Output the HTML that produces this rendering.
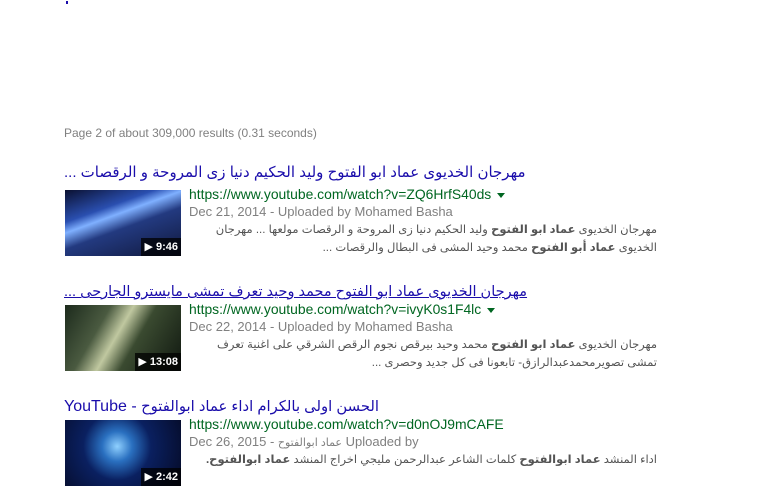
<!DOCTYPE html>
<html><head><meta charset="utf-8"><style>
body{margin:0;width:772px;height:498px;background:#fff;font-family:"Liberation Sans","DejaVu Sans",sans-serif;position:relative;overflow:hidden}
.a{position:absolute;white-space:nowrap}
.stats{left:64px;top:126px;font-size:12px;color:#808080}
.t{left:64px;font-size:16px;color:#1a0dab;line-height:20px}
.ar{font-size:15px}
.u{color:#1a0dab;text-decoration:underline}
.url{left:189px;font-size:13.9px;color:#006621;line-height:18px}
.d{left:189px;font-size:13px;color:#808080;line-height:18px}
.s{left:189px;width:468px;font-size:11.5px;color:#545454;line-height:18px;direction:rtl;text-align:right;white-space:normal}
.th{position:absolute;left:65px;width:116px;height:66px;overflow:hidden}
.dur{position:absolute;right:0;bottom:0;background:rgba(0,0,0,.75);color:#fff;font-size:11px;font-weight:bold;padding:2px 3px;line-height:14px}
.tri{display:inline-block;border-left:4px solid transparent;border-right:4px solid transparent;border-top:5px solid #006621;margin-left:6px;vertical-align:middle}
</style></head><body>
<div class="a" style="left:66px;top:1px;width:2px;height:3px;background:#1a0dab"></div>
<div class="a stats">Page 2 of about 309,000 results (0.31 seconds)</div>

<div class="a t ar" style="top:163px" dir="rtl">مهرجان الخديوى عماد ابو الفتوح وليد الحكيم دنيا زى المروحة و الرقصات ...</div>
<div class="th" style="top:190px;background:linear-gradient(160deg,#0a1030 0%,#2a4fb0 30%,#7fb0ff 40%,#233a80 55%,#10183c 100%)"><div class="dur">▶ 9:46</div></div>
<div class="a url" style="top:185px">https://www.youtube.com/watch?v=ZQ6HrfS40ds<span class="tri"></span></div>
<div class="a d" style="top:203px">Dec 21, 2014 - Uploaded by Mohamed Basha</div>
<div class="a s" style="top:221px">مهرجان الخديوى <b>عماد ابو الفتوح</b> وليد الحكيم دنيا زى المروحة و الرقصات مولعها ... مهرجان الخديوى <b>عماد أبو الفتوح</b> محمد وحيد المشى فى البطال والرقصات ...</div>

<div class="a t" style="top:282px;font-size:14.5px"><span class="u" dir="rtl">مهرجان الخديوى عماد ابو الفتوح محمد وحيد تعرف تمشى مايسترو الجارحى ...</span></div>
<div class="th" style="top:305px;background:linear-gradient(120deg,#1c2a1c 0%,#4a5a40 30%,#c0c8a0 45%,#3a4a30 60%,#101810 100%)"><div class="dur">▶ 13:08</div></div>
<div class="a url" style="top:300px">https://www.youtube.com/watch?v=ivyK0s1F4lc<span class="tri"></span></div>
<div class="a d" style="top:318px">Dec 22, 2014 - Uploaded by Mohamed Basha</div>
<div class="a s" style="top:336px">مهرجان الخديوى <b>عماد ابو الفتوح</b> محمد وحيد بيرقص نجوم الرقص الشرقي على اغنية تعرف تمشى تصويرمحمدعبدالرازق- تابعونا فى كل جديد وحصرى ...</div>

<div class="a t" style="top:397px">YouTube - <span dir="rtl" style="font-size:14.8px">الحسن اولى بالكرام اداء عماد ابوالفتوح</span></div>
<div class="th" style="top:420px;background:radial-gradient(circle at 45% 40%,#8fd0ff 0%,#2a70c0 20%,#0a2060 45%,#050a25 100%)"><div class="dur">▶ 2:42</div></div>
<div class="a url" style="top:415px">https://www.youtube.com/watch?v=d0nOJ9mCAFE</div>
<div class="a d" style="top:433px">Dec 26, 2015 - <span style="font-size:11px">عماد ابوالفتوح</span> Uploaded by</div>
<div class="a s" style="top:451px">اداء المنشد <b>عماد ابوالفتوح</b> كلمات الشاعر عبدالرحمن مليجي اخراج المنشد <b>عماد ابوالفتوح.</b></div>
</body></html>
